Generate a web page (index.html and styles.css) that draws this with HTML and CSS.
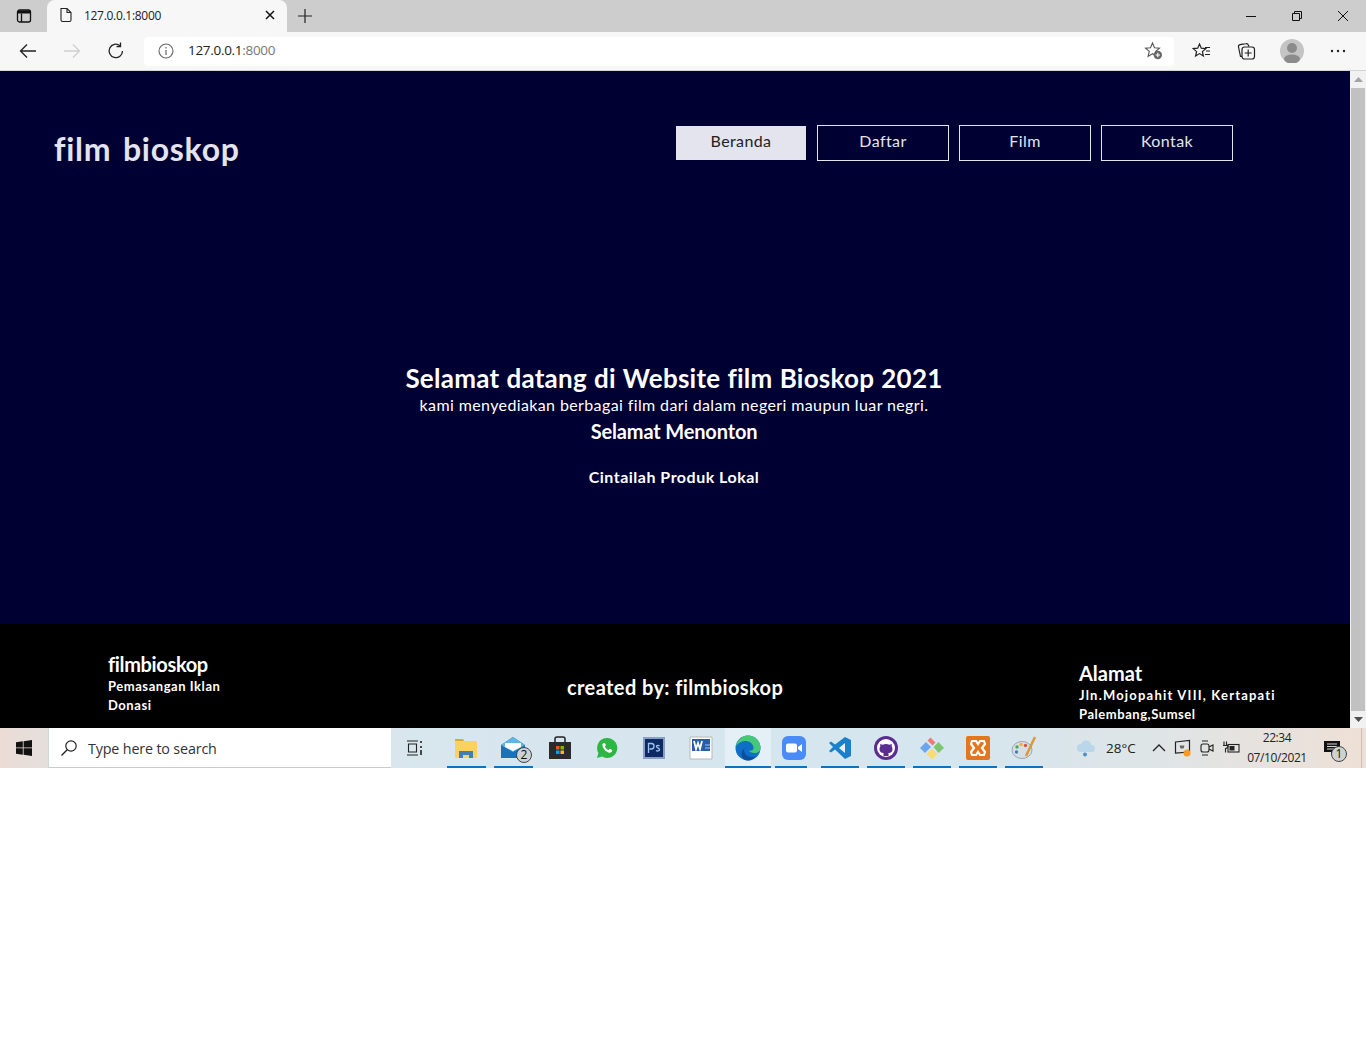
FILE: index.html
```html
<!DOCTYPE html>
<html lang="id">
<head>
<meta charset="utf-8">
<title>film bioskop</title>
<link rel="stylesheet" href="styles.css">
</head>
<body>
<div class="tabstrip">
  <div class="sidebtn"><svg width="16" height="16" viewBox="0 0 16 16"><rect x="1.500" y="2" width="13" height="12" rx="2" fill="none" stroke="#111" stroke-width="1.300"/><path d="M5.500 5.500V14" fill="none" stroke="#111" stroke-width="1.300"/><path d="M2 2.500h12v3H2z" fill="#111"/></svg></div>
  <div class="tab">
    <svg class="tab-doc" width="14" height="16" viewBox="0 0 14 16"><path d="M2 1.500h6l4 4V13a1.500 1.500 0 0 1-1.500 1.500h-7A1.500 1.500 0 0 1 2 13zM8 1.500V5.500h4" fill="none" stroke="#222" stroke-width="1.100"/></svg>
    <span class="tab-title">127.0.0.1:8000</span>
    <svg class="tab-close" width="10" height="10" viewBox="0 0 10 10"><path d="M1 1l8 8M9 1l-8 8" stroke="#111" stroke-width="1.500"/></svg>
  </div>
  <div class="newtab"><svg width="16" height="16" viewBox="0 0 16 16"><path d="M8 1v14M1 8h14" stroke="#222" stroke-width="1.200"/></svg></div>
  <div class="winctl">
    <div class="winbtn"><svg width="12" height="12" viewBox="0 0 12 12"><path d="M1 6.500h10" stroke="#111"/></svg></div>
    <div class="winbtn"><svg width="12" height="12" viewBox="0 0 12 12"><path d="M1.500 3.500h7v7h-7zM3.500 3.500v-2h7v7h-2" fill="none" stroke="#111"/></svg></div>
    <div class="winbtn"><svg width="12" height="12" viewBox="0 0 12 12"><path d="M1 1l10 10M11 1L1 11" stroke="#111"/></svg></div>
  </div>
</div>

<div class="toolbar">
  <div class="navbtn"><svg width="18" height="16" viewBox="0 0 18 16"><path d="M17 8H1.500M8 1.500L1.500 8 8 14.500" fill="none" stroke="#222" stroke-width="1.300"/></svg></div>
  <div class="navbtn"><svg width="18" height="16" viewBox="0 0 18 16"><path d="M1 8h15.500M10 1.500L16.500 8 10 14.500" fill="none" stroke="#d0d0d0" stroke-width="1.300"/></svg></div>
  <div class="navbtn"><svg width="18" height="18" viewBox="0 0 18 18"><path d="M15.500 9A6.700 6.700 0 1 1 13 3.700" fill="none" stroke="#222" stroke-width="1.300"/><path d="M13.500 0.500V4.500H9.500" fill="none" stroke="#222" stroke-width="1.300"/></svg></div>
  <div class="address">
    <svg class="addr-info" width="16" height="16" viewBox="0 0 16 16"><circle cx="8" cy="8" r="7" fill="none" stroke="#666" stroke-width="1.100"/><path d="M8 7v5M8 4v1.500" stroke="#666" stroke-width="1.200"/></svg>
    <span class="addr-text">127.0.0.1<span class="addr-port">:8000</span></span>
    <svg class="addr-star" width="20" height="20" viewBox="0 0 20 20"><path d="M8.500 2l2 4.700 5 .4-3.800 3.300 1.200 5-4.400-2.700-4.400 2.700 1.200-5L1.500 7.100l5-.4z" fill="none" stroke="#555" stroke-width="1.100"/><circle cx="13.800" cy="14" r="4.200" fill="#666"/><path d="M13.800 11.800v4.400M11.600 14H16" stroke="#fff" stroke-width="1.100"/></svg>
  </div>
  <div class="tool tool-fav"><svg width="20" height="20" viewBox="0 0 20 20"><path d="M7.500 3l1.800 4.200 4.500.4-3.400 3 1 4.400-3.900-2.400L3.600 15l1-4.400-3.400-3 4.500-.4z" fill="#f7f7f7" stroke="#222" stroke-width="1.200"/><path d="M13 6.500h5M14 10h4M13 13.500h5" stroke="#222" stroke-width="1.200"/></svg></div>
  <div class="tool"><svg width="20" height="20" viewBox="0 0 20 20"><path d="M6 15.500H4.500L2.500 6A2 2 0 0 1 4 3.700l6-1a2 2 0 0 1 2.300 1.300L13 5.500" fill="none" stroke="#222" stroke-width="1.200"/><rect x="6" y="6" width="12.500" height="12" rx="2.500" fill="#f7f7f7" stroke="#222" stroke-width="1.200"/><path d="M12.200 8.500v7M8.700 12h7" stroke="#222" stroke-width="1.200"/></svg></div>
  <div class="avatar"><svg width="24" height="24" viewBox="0 0 24 24"><circle cx="12" cy="12" r="12" fill="#c4c4c4"/><circle cx="12" cy="9" r="5" fill="#8b8b8b"/><ellipse cx="12" cy="20" rx="8" ry="4.500" fill="#8b8b8b"/></svg></div>
  <div class="tool tool-more"><svg width="16" height="4" viewBox="0 0 16 4"><circle cx="2" cy="2" r="1.200" fill="#222"/><circle cx="8" cy="2" r="1.200" fill="#222"/><circle cx="14" cy="2" r="1.200" fill="#222"/></svg></div>
</div>

<div class="viewport">
  <div class="page">
    <header class="site-header">
      <h1 class="logo">film bioskop</h1>
      <nav class="menu">
        <a class="menu-item active">Beranda</a>
        <a class="menu-item">Daftar</a>
        <a class="menu-item">Film</a>
        <a class="menu-item">Kontak</a>
      </nav>
    </header>
    <main class="hero">
      <h2 class="hero-title">Selamat datang di Website film Bioskop 2021</h2>
      <p class="hero-sub">kami menyediakan berbagai film dari dalam negeri maupun luar negri.</p>
      <h3 class="hero-greet">Selamat Menonton</h3>
      <h4 class="hero-love">Cintailah Produk Lokal</h4>
    </main>
    <footer class="site-footer">
      <div class="foot-left">
        <div class="foot-head">filmbioskop</div>
        <div class="foot-line">Pemasangan Iklan</div>
        <div class="foot-line">Donasi</div>
      </div>
      <div class="foot-center">created by: filmbioskop</div>
      <div class="foot-right">
        <div class="foot-head">Alamat</div>
        <div class="foot-line foot-wide">Jln.Mojopahit VIII, Kertapati</div>
        <div class="foot-line">Palembang,Sumsel</div>
      </div>
    </footer>
  </div>
  <div class="scrollbar">
    <div class="arrow"><svg width="9" height="5" viewBox="0 0 9 5"><path d="M4.500 0L9 5H0z" fill="#a3a3a3"/></svg></div>
    <div class="thumb"></div>
    <div class="arrow"><svg width="9" height="5" viewBox="0 0 9 5"><path d="M0 0h9L4.500 5z" fill="#505050"/></svg></div>
  </div>
</div>

<div class="taskbar">
  <div class="start"><svg width="16" height="16" viewBox="0 0 16 16"><path d="M0 2.300l6.800-1V7.500H0zM7.600 1.200L16 0v7.500H7.600zM0 8.300h6.800v6.400l-6.800-1zM7.600 8.300H16V16l-8.400-1.200z" fill="#111"/></svg></div>
  <div class="search">
    <svg width="18" height="18" viewBox="0 0 18 18"><circle cx="11" cy="7" r="5.200" fill="none" stroke="#222" stroke-width="1.200"/><path d="M7.200 10.800L1.500 16.500" stroke="#222" stroke-width="1.300"/></svg>
    <span class="search-text">Type here to search</span>
  </div>
  <div class="taskview"><svg width="18" height="18" viewBox="0 0 18 18"><path d="M1 2h11M1 16h11M2.500 5h8v8h-8z" fill="none" stroke="#222" stroke-width="1.100"/><path d="M15 2v2M15 7v2M15 11v5" stroke="#222" stroke-width="1.600"/></svg></div>

  <div class="app wide on"><svg width="24" height="22" viewBox="0 0 24 22"><path d="M1 2h8l2 3H1z" fill="#e0a92e"/><path d="M1 4h22v17H1z" fill="#fbd25e"/><path d="M5 21v-7h14v7h-4v-3H9v3z" fill="#3f7fb5"/></svg></div>
  <div class="app wide on"><svg width="26" height="24" viewBox="0 0 26 24"><path d="M1 9l12-8 12 8v13H1z" fill="#1a73b8"/><path d="M1 9l12 7 12-7-12-8z" fill="#5cb6e8"/><path d="M5 7h16v4l-8 4-8-4z" fill="#fff"/></svg><span class="badge">2</span></div>
  <div class="app wide"><svg width="24" height="24" viewBox="0 0 24 24"><path d="M7 7V3a2 2 0 0 1 2-2h6a2 2 0 0 1 2 2v4" fill="none" stroke="#222" stroke-width="1.500"/><path d="M1 6h22v17H1z" fill="#2b2b2b"/><path d="M8 10h3.500v3.500H8z" fill="#f25022"/><path d="M12.500 10H16v3.500h-3.500z" fill="#7fba00"/><path d="M8 14.500h3.500V18H8z" fill="#00a4ef"/><path d="M12.500 14.500H16V18h-3.500z" fill="#ffb900"/></svg></div>
  <div class="app wide"><svg width="22" height="22" viewBox="0 0 22 22"><path d="M11 1a10 10 0 0 0-8.600 15L1 21l5.200-1.400A10 10 0 1 0 11 1z" fill="#2bb741"/><path d="M7.500 6c-1 .6-1.500 2-.8 3.800 1 2.600 3 4.700 5.800 5.700 1.800.6 3-.2 3.500-1.200l.2-1.300-2.500-1.200-1.200 1.300c-1.500-.5-3-2-3.600-3.500l1-1.300L9 6z" fill="#fff"/></svg></div>
  <div class="app wide"><svg width="22" height="22" viewBox="0 0 22 22"><path d="M0 0h22v22H0z" fill="#8a9fc4"/><path d="M2 2h18v18H2z" fill="#0f2a63"/><path d="M5.500 16V6.500h2.800a2.500 2.500 0 0 1 0 5.500H6.500M16.500 9c-1-.8-3-.8-3 .6s3 1.100 3 2.900-2.300 1.800-3.500 1" fill="none" stroke="#9cc4f2" stroke-width="1.300"/></svg></div>
  <div class="app wide"><svg width="24" height="24" viewBox="0 0 24 24"><path d="M1 1h22v22H1z" fill="#fff" stroke="#b8b8b8"/><path d="M3 3h18v12H3z" fill="#2a5caa"/><path d="M5 5l2 8 2-6 2 6 2-8" fill="none" stroke="#fff" stroke-width="1.800"/><path d="M16 9h5M16 12h5" stroke="#9cc4f2"/></svg></div>
  <div class="app edge on"><svg width="26" height="26" viewBox="0 0 26 26"><circle cx="13" cy="13" r="12.500" fill="#0f6fc6"/><path d="M1 12C2 5 7 .5 13 .5 20 .5 25.500 6 25.500 13c0 3-2.500 5-6 5-3 0-5-1-5.500-2.500 3 .8 5-1 4.500-3.500C17.500 8 14 6 10.500 6 6 6 2.500 8.500 1 12z" fill="#45c87a"/><path d="M9 15c0 4 3.500 7 8 7 1.500 0 3-.4 4-1-2 2.800-5 4.500-8 4.500-4 0-6.500-3-6.500-6.500 0-3 2-6 5.500-6.500C10 13 9 14 9 15z" fill="#0b4f9e"/></svg></div>
  <div class="app on half"><svg width="24" height="24" viewBox="0 0 24 24"><rect width="24" height="24" rx="6" fill="#4a8cf7"/><rect x="4" y="7.500" width="11" height="9" rx="2" fill="#fff"/><path d="M16 11l4-3v8l-4-3z" fill="#fff"/></svg></div>
  <div class="app on"><svg width="24" height="24" viewBox="0 0 24 24"><path d="M17 1l6 3v16l-6 3-10-9.500-4 3-2-1.500 4-4-4-4 2-1.500 4 3z" fill="#1a80cc"/><path d="M17 7l-6 5 6 5z" fill="#e6f0f6"/></svg></div>
  <div class="app on"><svg width="24" height="24" viewBox="0 0 24 24"><circle cx="12" cy="12" r="12" fill="#5c2d91"/><circle cx="12" cy="12" r="9" fill="#fff"/><path d="M9.500 20v-3c-2.500 0-4-1.500-4-4 0-1 .3-1.800.8-2.500L6.200 8 8.500 8.800a8 8 0 0 1 7 0L17.800 8l-.1 2.500c.5.700.8 1.500.8 2.500 0 2.500-1.500 4-4 4v3z" fill="#5c2d91"/></svg></div>
  <div class="app on"><svg width="26" height="26" viewBox="0 0 26 26"><path d="M1 13l6-6 5 5-6 6z" fill="#6aa5ee"/><path d="M8.500 5.500l3-3 5 5-3 3z" fill="#ef7a74"/><path d="M14.500 12l5-5 5.500 6-5.500 5z" fill="#7cc573"/><path d="M7.500 19l5.500-5.500 5.500 5.500-5.500 5.500z" fill="#f7dc74"/></svg></div>
  <div class="app on"><svg width="24" height="24" viewBox="0 0 24 24"><rect width="24" height="24" rx="2" fill="#e4761d"/><path d="M6 5h4l2 3 2-3h4l1 3-3 4 3 4-1 3h-4l-2-3-2 3H6l-1-3 3-4-3-4z" fill="none" stroke="#fff" stroke-width="2.200"/></svg></div>
  <div class="app on"><svg width="26" height="24" viewBox="0 0 26 24"><ellipse cx="11" cy="14" rx="10" ry="8.500" fill="#d7dfe6" stroke="#9aa8b2"/><circle cx="6" cy="11" r="1.700" fill="#4aa860"/><circle cx="10" cy="8.500" r="1.700" fill="#e9b23a"/><circle cx="14.500" cy="9.500" r="1.700" fill="#d6533f"/><circle cx="5.500" cy="16" r="1.700" fill="#3f7fb5"/><path d="M24 1l-9 19" stroke="#d99a3c" stroke-width="2.500"/></svg></div>

  <div class="tray">
    <svg class="tray-cloud" width="20" height="18" viewBox="0 0 20 18"><path d="M5 13a4 4 0 0 1 0-8 5.500 5.500 0 0 1 10.500 1 3.500 3.500 0 0 1 0 7z" fill="#b9d6ea"/><circle cx="9" cy="15.500" r="2" fill="#4a8fc9"/></svg>
    <span class="temp">28°C</span>
    <svg class="tray-chev" width="14" height="8" viewBox="0 0 14 8"><path d="M1 7l6-6 6 6" fill="none" stroke="#222" stroke-width="1.300"/></svg>
    <svg class="tray-icon" width="18" height="18" viewBox="0 0 18 18"><path d="M1.500 3l14-1.500V13l-14 1z" fill="none" stroke="#222" stroke-width="1.200"/><path d="M5.500 6.500h5l-1 3h-3z" fill="#666"/><circle cx="13" cy="14" r="3.500" fill="#f59a23"/></svg>
    <svg class="tray-icon" width="18" height="18" viewBox="0 0 18 18"><rect x="3" y="5" width="8" height="8" rx="2" fill="none" stroke="#222" stroke-width="1.100"/><path d="M11 8l4-2v6l-4-2M4 2h6M4 16h6" fill="none" stroke="#222" stroke-width="1.100"/></svg>
    <svg class="tray-icon" width="18" height="18" viewBox="0 0 18 18"><rect x="6" y="5.500" width="11" height="7.500" fill="none" stroke="#222" stroke-width="1.100"/><path d="M7.500 7h5v4.500h-5z" fill="#222"/><path d="M2 2.500v4M4.500 2.500v4M1 6.500h5c0 2-1 3-2.500 3v4" fill="none" stroke="#222" stroke-width="1.100"/></svg>
    <div class="clock"><span>22:34</span><span>07/10/2021</span></div>
    <div class="notify"><svg width="18" height="16" viewBox="0 0 18 16"><path d="M1 1h16v11h-6l-3 3v-3H1z" fill="#111"/><path d="M4 4h10M4 6.500h10M4 9h7" stroke="#eee" stroke-width=".9"/></svg><span class="badge badge-n">1</span></div>
    <div class="showdesk"></div>
  </div>
</div>
<div class="below"></div>
</body>
</html>
```

FILE: styles.css
```css
* { box-sizing: border-box; }
html, body { margin: 0; padding: 0; }
body { width: 1366px; height: 1043px; overflow: hidden; background: #fff; font-family: "Liberation Sans", Arial, sans-serif; display: flex; flex-direction: column; }

.tabstrip { flex: none; height: 32px; background: #cdcdcd; display: flex; align-items: stretch; }
.sidebtn { width: 47px; display: flex; align-items: center; justify-content: center; }
.tab { width: 240px; background: #f7f7f7; border-radius: 8px 8px 0 0; display: flex; align-items: center; padding: 0 12px 2px; }
.tab-doc { flex: none; }
.tab-title { flex: 1; margin-left: 11px; font-size: 12px; color: #222; font-family: "Open Sans", sans-serif; letter-spacing: -.3px; }
.newtab { width: 36px; display: flex; align-items: center; justify-content: center; }
.winctl { margin-left: auto; display: flex; }
.winbtn { width: 46px; display: flex; align-items: center; justify-content: center; }

.toolbar { flex: none; height: 39px; background: #f7f7f7; border-bottom: 1px solid #d6d6d6; display: flex; align-items: center; padding-left: 6px; }
.navbtn { width: 44px; display: flex; align-items: center; justify-content: center; }
.address { width: 1030px; height: 29px; margin-left: 6px; background: #fff; border-radius: 4px; display: flex; align-items: center; padding: 0 10px 1px 14px; }
.addr-info { flex: none; }
.addr-text { margin: 0 0 2px 14px; flex: 1; font-size: 13.500px; color: #222; font-family: "Open Sans", sans-serif; letter-spacing: -.3px; }
.addr-port { color: #777; }
.addr-star { flex: none; }
.tool { width: 44px; display: flex; align-items: center; justify-content: center; }
.tool-fav { margin-left: 6px; }
.avatar { width: 48px; display: flex; align-items: center; justify-content: center; }

.viewport { flex: none; height: 657px; display: flex; }
.page { width: 1350px; display: flex; flex-direction: column; background: #000033; font-family: "Lato", "Open Sans", sans-serif; font-variant-ligatures: none; color: #fff; }
.site-header { flex: none; height: 90px; margin-top: 54px; display: flex; align-items: flex-start; justify-content: space-between; padding-left: 54px; padding-right: 117px; }
.logo { margin: 3px 0 0; font-size: 32px; line-height: 42px; font-weight: 700; color: #e4e4ee; letter-spacing: .75px; word-spacing: 3px; }
.menu { display: flex; gap: 10px; }
.menu-item { width: 132px; height: 36px; border: 1px solid #e4e4ee; color: #e4e4ee; font-size: 16px; line-height: 29px; text-align: center; letter-spacing: .4px; }
.menu-item.active { background: #e4e4ee; color: #222; border-color: #000033; }

.hero { flex: 1; display: flex; flex-direction: column; align-items: center; padding-right: 2px; margin-top: 147px; }
.hero-title { margin: 0; font-size: 26px; line-height: 32px; font-weight: 700; letter-spacing: .25px; word-spacing: .5px; }
.hero-sub { margin: 0; font-size: 16px; line-height: 22px; letter-spacing: .38px; }
.hero-greet { margin: 2px 0 0; font-size: 20px; line-height: 26px; font-weight: 700; letter-spacing: -.15px; }
.hero-love { margin: 22px 0 0; font-size: 16px; line-height: 22px; font-weight: 700; letter-spacing: .5px; }

.site-footer { flex: none; height: 104px; background: #000; display: grid; grid-template-columns: 459px 512px 1fr; padding-left: 108px; }
.foot-left { padding-top: 27px; }
.foot-left .foot-head { letter-spacing: -.35px; }
.foot-center { padding-top: 50px; font-size: 20px; line-height: 26px; font-weight: 700; letter-spacing: .4px; }
.foot-right { padding-top: 36px; }
.foot-head { font-size: 20px; line-height: 26px; font-weight: 700; }
.foot-line { font-size: 13px; line-height: 19px; font-weight: 700; letter-spacing: .55px; white-space: nowrap; }
.foot-wide { letter-spacing: 1.200px; }

.scrollbar { width: 16px; background: #f1f1f1; display: flex; flex-direction: column; align-items: center; }
.arrow { flex: none; height: 17px; display: flex; align-items: center; justify-content: center; }
.thumb { flex: 1; width: 14px; background: #c1c1c1; }

.taskbar { flex: none; height: 40px; display: flex; align-items: stretch; background: linear-gradient(90deg, #ecdcd4 0, #e5dfdc 3%, #d8e6ee 30%, #d5e6ef 70%, #dfe5e6 85%, #eee0d6 100%); }
.start { flex: none; width: 48px; display: flex; align-items: center; justify-content: center; }
.search { flex: none; width: 343px; background: #fff; border-left: 1px solid #cfd5d8; border-bottom: 1px solid #c8ccce; display: flex; align-items: center; padding-left: 11px; }
.search-text { margin: 1px 0 0 10px; font-size: 14.300px; color: #333; font-family: "Open Sans", sans-serif; letter-spacing: -.15px; }
.taskview { flex: none; width: 52px; padding-right: 4px; display: flex; align-items: center; justify-content: center; }

.app { flex: none; position: relative; width: 46px; display: flex; align-items: center; justify-content: center; }
.app.wide { width: 47px; }
.app.wide > svg { margin-right: 2px; }
.app.on::after { content: ""; position: absolute; left: 4px; right: 4px; bottom: 0; height: 2px; background: #0a73c2; }
.app.edge { background: #e4f0f6; }
.app.edge::after { left: 0; right: 0; }
.app.half::after { right: 10px; }
.badge { position: absolute; left: 26px; top: 19px; width: 16px; height: 16px; border-radius: 50%; background: #ccd2d6; border: 1px solid #444; color: #111; font-size: 12px; line-height: 14px; text-align: center; font-family: "Open Sans", sans-serif; }

.tray { flex: none; width: 318px; display: flex; align-items: center; padding-left: 29px; }
.tray-cloud { flex: none; }
.temp { flex: none; width: 30px; margin-left: 10px; font-size: 13.500px; color: #222; font-family: "Open Sans", sans-serif; white-space: nowrap; }
.tray-chev { flex: none; margin-left: 16px; }
.tray-icon { flex: none; margin-left: 6px; }
.tray-chev + .tray-icon { margin-left: 8px; }
.clock { flex: none; width: 70px; margin-left: 2px; display: flex; flex-direction: column; align-items: center; font-size: 12px; line-height: 20px; color: #222; font-family: "Open Sans", sans-serif; letter-spacing: -.4px; }
.notify { flex: none; position: relative; width: 40px; display: flex; justify-content: center; }
.badge-n { left: 19px; top: 6px; }
.showdesk { flex: none; width: 1px; height: 40px; margin-left: 9px; background: #cdbfb8; }

.below { flex: 1; background: #fff; }
```
